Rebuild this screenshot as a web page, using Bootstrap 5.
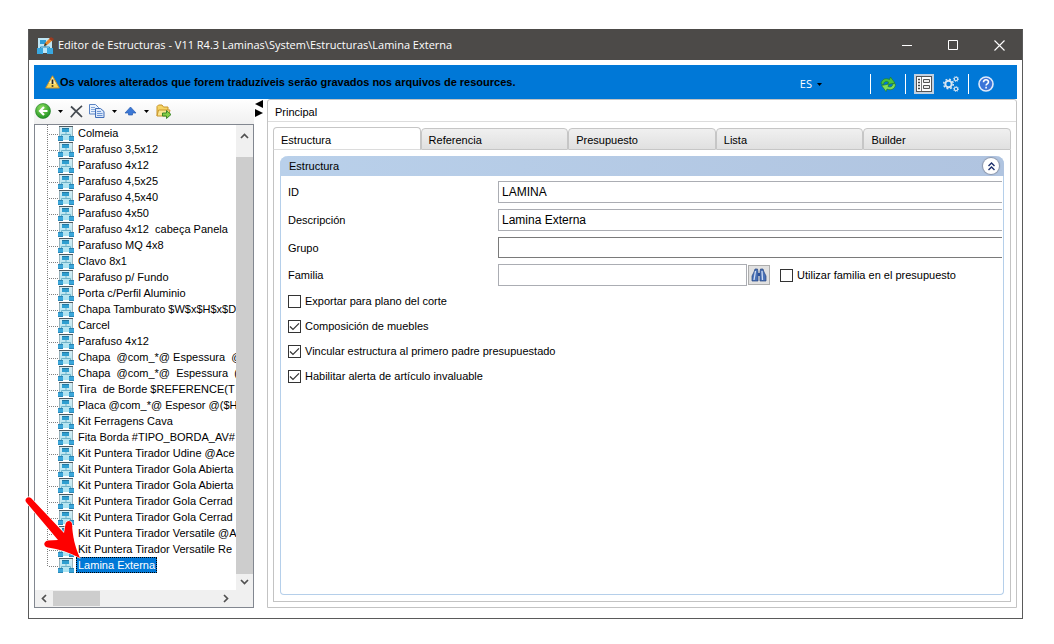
<!DOCTYPE html>
<html lang="es">
<head>
<meta charset="utf-8">
<meta name="viewport" content="width=device-width, initial-scale=1">
<title>Editor de Estructuras</title>
<link href="https://cdn.jsdelivr.net/npm/bootstrap@5.3.0/dist/css/bootstrap.min.css" rel="stylesheet">
<style>
body{font-family:"Liberation Sans",Arial,sans-serif;font-size:11px;line-height:16px;color:#000;background:#fff}
svg{display:block;flex:none}
button{color:inherit;font:inherit}
.app-window{margin:29px 31px 0 28px;border:1px solid #5a5a5a;border-top-color:#4c4a48}
.title-bar{background:#4c4a48;color:#fff;height:30px;font-family:"Open Sans","Noto Sans",sans-serif;font-size:11px}
.win-btn{width:46px;height:30px}
.plain-btn{background:none;border:0;padding:0;display:flex;align-items:center;justify-content:center}
.work-area{padding:5px 5px 10px}
.banner{background:#0078d7;height:34px;padding-left:11px}
.banner-text{font-weight:700}
.banner-tools{padding-right:22px}
.banner-icon{width:18px}
.lang-btn{font-family:"Open Sans","Noto Sans",sans-serif;font-size:11px;color:#fff;gap:5px;margin-right:40px}
.divider{width:1px;height:20px;background:#fff}
.tog{background:#c3d1e0;width:20px;height:20px}
.left-pane{width:220px;flex:none}
.tool-strip{height:25px;padding:0 0 1px 1px;background:linear-gradient(#fff,#f0f0f0)}
.drop-btn{padding:0 7px}
.copy-btn{margin-left:6px}
.tree-box{border:1px solid #828790;background:#fff}
.tree{padding:0 0 17px 12px;overflow:hidden;margin:0}
.tree li{height:16px;white-space:pre;display:flex;align-items:center}
.tree li::before{content:"";align-self:stretch;flex:none;width:1px;background:repeating-linear-gradient(#808080 0 1px,transparent 1px 2px)}
.tree li:last-child::before{height:9px;align-self:flex-start}
.tree li::after{content:"";order:1;width:10px;height:1px;margin-top:2px;flex:none;background:repeating-linear-gradient(90deg,transparent 0 1px,#808080 1px 2px)}
.tree svg{order:2}
.tree span{order:3;padding:0 2px;margin-left:2px;flex:none}
.tree .chosen{background:#0078d7;color:#fff;outline:1px dotted #000;outline-offset:-1px}
.vscroll{width:17px;background:#f0f0f0;flex:none}
.vscroll .thumb{background:#cdcdcd;margin-top:18px}
.hscroll{height:17px;background:#f0f0f0;padding-left:6px}
.hthumb{width:47px;height:15px;background:#cdcdcd;margin-left:6px}
.pointer{position:absolute;left:-12px;bottom:45px;pointer-events:none}
.splitter{width:13px;flex:none;padding:1px 0 0 1px}
.right-pane{border:1px solid #c3c3c3;border-radius:3px 3px 0 0;min-width:0}
.main-head{height:22px;padding:4px 7px;border-bottom:1px solid #dcdcdc}
.tab-frame{margin:5px}
.tab-row .tab-btn{flex:1 1 0;height:22px;text-align:left;padding:2px 7px 0;background:linear-gradient(#f0f0f0,#e0e0e0);border:1px solid #c6c6c6;border-radius:4px 4px 0 0;margin-top:1px}
.tab-row .tab-btn.active{background:#fff;border-bottom-color:#dcdcdc;height:23px;margin-top:0}
.tab-body{border:1px solid #c3c3c3;border-top:0;padding:6px}
.group{border:1px solid #b5cfea;border-top:0;border-radius:8px 8px 4px 4px}
.group-head{background:linear-gradient(90deg,#b9d0ea,#b0c4e0);height:20px;margin:0 -1px;padding:0 5px 0 9px;border-radius:8px 8px 0 0}
.round-btn{width:16px;height:16px;border-radius:50%;background:#fff;box-shadow:0 0 1px 1px #8a94a8}
.fields{padding:5px 1px 0 7px;gap:6px}
.f-label{width:210px;flex:none}
.f-in{height:22px;border:1px solid #abadb3;border-radius:0;padding:0 3px;font-size:12px;line-height:20px;color:#000;min-width:0;background:#fff}
.f-open{border-right:0}
.f-combo{height:21px;border-color:#7a7a7a}
.f-half{width:249px}
.find-btn{width:22px;height:20px;background:#e1e1e1;border:1px solid #adadad;margin-left:1px}
.side-check{margin-left:10px}
.checks{padding:7px 7px 0;gap:9px}
.ck{appearance:none;width:13px;height:13px;border:1px solid #333;background:#fff;margin:0 4px 0 0;flex:none}
.ck:checked{background:#fff url("data:image/svg+xml,%3Csvg xmlns='http://www.w3.org/2000/svg' viewBox='0 0 11 11'%3E%3Cpath d='M1 5.500l3 3 6-6.200' fill='none' stroke='%23333' stroke-width='1.2'/%3E%3C/svg%3E")}
</style>
</head>
<body>
<svg width="0" height="0" class="position-absolute" aria-hidden="true">
  <defs>
    <linearGradient id="ice" x1="0" y1="0" x2="0" y2="1"><stop offset="0" stop-color="#d9eef5"/><stop offset="1" stop-color="#a8e2f0"/></linearGradient>
    <radialGradient id="leaf" cx=".4" cy=".3" r=".8"><stop offset="0" stop-color="#8ee05f"/><stop offset="1" stop-color="#12881c"/></radialGradient>
    <symbol id="node" viewBox="0 0 16 16">
      <rect x="1" y="1" width="14" height="14" fill="url(#ice)"/>
      <path d="M1 1.500h14" stroke="#4e5a60"/>
      <path d="M1.500 2v9M14.500 2v9" stroke="#9ab4bd"/>
      <path d="M8 7v2M3.500 11V9.500h9V11" fill="none" stroke="#6fb2c8"/>
      <rect x="4" y="3" width="7" height="4" fill="#2f9fd0"/>
      <path d="M4 3.500h7" stroke="#2277a2"/>
      <rect x="0" y="11" width="5" height="5" fill="#3aa6da"/><path d="M0 15.500h5M0 11.500h5" stroke="#2b86b4"/>
      <rect x="11" y="11" width="5" height="5" fill="#3aa6da"/><path d="M11 15.500h5M11 11.500h5" stroke="#2b86b4"/>
    </symbol>
    <symbol id="caret" viewBox="0 0 5 3"><path d="M0 0h5L2.500 3z" fill="#000"/></symbol>
  </defs>
</svg>

<div class="app-window">
  <header class="title-bar d-flex align-items-center">
    <svg class="ms-2 me-1" width="17" height="17" viewBox="0 0 17 17" aria-hidden="true">
      <rect x="1" y="1" width="14" height="15" fill="#bfe6f5"/>
      <path d="M8 8v2M3.500 12v-2h9v2" fill="none" stroke="#2f86b5"/>
      <rect x="3" y="3" width="6" height="4" fill="#2e9bd6"/>
      <rect x="0" y="11" width="6" height="6" fill="#38a8e0"/><rect x="10" y="11" width="6" height="6" fill="#38a8e0"/>
      <path d="M7 9l1-3 5-5 3 2-6 5z" fill="#e8862c"/><path d="M12 2l2-2 3 2-2 2z" fill="#9c3a1e"/><path d="M7 9l1-3 2 2z" fill="#332"/>
    </svg>
    <span class="text-nowrap">Editor de Estructuras - V11 R4.3 Laminas\System\Estructuras\Lamina Externa</span>
    <div class="d-flex ms-auto">
      <button class="plain-btn win-btn" aria-label="Minimizar"><svg width="11" height="11"><path d="M0 5.500h10" stroke="#fff"/></svg></button>
      <button class="plain-btn win-btn" aria-label="Maximizar"><svg width="11" height="11"><path d="M.5.500h9v9h-9z" fill="none" stroke="#fff"/></svg></button>
      <button class="plain-btn win-btn" aria-label="Cerrar"><svg width="11" height="11"><path d="M.5.500l10 10M10.500.500l-10 10" stroke="#fff" stroke-width="1.100"/></svg></button>
    </div>
  </header>

  <div class="work-area">
    <div class="banner d-flex align-items-center">
      <svg width="15" height="14" viewBox="0 0 15 14" aria-hidden="true"><path d="M7.500.800L14.300 13H.700z" fill="#f6d55a" stroke="#c8922a" stroke-linejoin="round"/><path d="M7.500 2.500L11 9 4 8z" fill="#fbf0b4"/><path d="M7.500 4.500v4.500M7.500 10.300v1.500" stroke="#222" stroke-width="1.700"/></svg>
      <span class="banner-text text-nowrap">Os valores alterados que forem traduzíveis serão gravados nos arquivos de resources.</span>
      <div class="banner-tools d-flex align-items-center ms-auto gap-2 pt-1">
        <button class="plain-btn lang-btn">ES <svg width="5" height="3"><use href="#caret"/></svg></button>
        <div class="divider"></div>
        <button class="plain-btn banner-icon" aria-label="Actualizar"><svg width="16" height="16" viewBox="0 0 16 16"><path d="M1 8C1.500 3.500 5 1.500 9.500 3.500L10.500 1l4.500 6-7.500 1.500 1-2.500C6 4.800 4 5.500 3.500 8.500z" fill="#4cc23c" stroke="#1e7a1e" stroke-width=".6"/><path d="M15.500 8c0 4.500-4 7-8.500 5l-1 2.500-4.500-6 7.500-1.500-1 2.500c2.500 1 4.500.500 5-3z" fill="#7fdc57" stroke="#1e7a1e" stroke-width=".6"/></svg></button>
        <div class="divider"></div>
        <button class="plain-btn tog" aria-label="Panel"><svg width="16" height="16" viewBox="0 0 16 16"><rect x=".5" y=".5" width="15" height="15" fill="#fff" stroke="#555"/><path d="M5.500 1v14" stroke="#777"/><path d="M2 3.500h2M2 6.500h2M2 9.500h2M2 12.500h2" stroke="#444" stroke-width="1.500"/><path d="M7.500 3.500h6v3h-6zM7.500 9.500h6v3h-6z" fill="#eee" stroke="#555"/></svg></button>
        <button class="plain-btn banner-icon" aria-label="Opciones"><svg width="16" height="16" viewBox="0 0 16 16" fill="none" stroke="#d9e6f2"><circle cx="5.500" cy="8" r="3.200" stroke-width="2"/><circle cx="5.500" cy="8" r="4.800" stroke-width="1.500" stroke-dasharray="1.900 1.870"/><circle cx="13" cy="3" r="1.700" stroke-width="1.100"/><circle cx="13" cy="3" r="2.600" stroke-dasharray="1 1.040" stroke-width=".9"/><circle cx="13" cy="13" r="1.700" stroke-width="1.100"/><circle cx="13" cy="13" r="2.600" stroke-dasharray="1 1.040" stroke-width=".9"/></svg></button>
        <div class="divider"></div>
        <button class="plain-btn banner-icon" aria-label="Ayuda"><svg width="16" height="16" viewBox="0 0 16 16"><circle cx="8" cy="8" r="7" fill="#3c74d8" stroke="#dfe9fa" stroke-width="1.600"/><path d="M5.500 6.300C5.500 3 10.500 3 10.500 6c0 2-2.400 1.800-2.400 3.600M8.100 10.800v1.700" fill="none" stroke="#fff" stroke-width="1.600"/></svg></button>
      </div>
    </div>

    <main class="d-flex align-items-stretch">
      <aside class="left-pane position-relative">
        <div class="tool-strip d-flex align-items-center">
          <button class="plain-btn" aria-label="Atrás"><svg width="16" height="16" viewBox="0 0 16 16"><circle cx="8" cy="8" r="7.500" fill="url(#leaf)" stroke="#1c7c22" stroke-width=".6"/><path d="M9 4L5 8l4 4M5.500 8H12.500" fill="none" stroke="#fff" stroke-width="2.200"/></svg></button>
          <button class="plain-btn drop-btn" aria-label="Historial"><svg width="5" height="3"><use href="#caret"/></svg></button>
          <button class="plain-btn" aria-label="Eliminar"><svg width="13" height="13" viewBox="0 0 13 13"><path d="M1 1.500C5 5 8 8 12 12M12 .800C8 4 4 8 .800 12.200" fill="none" stroke="#444a50" stroke-width="1.700"/></svg></button>
          <button class="plain-btn copy-btn" aria-label="Copiar"><svg width="16" height="14" viewBox="0 0 16 14"><path d="M.5.500h6l3 3v6.500h-9z" fill="#eaf2fc" stroke="#5b84c4"/><path d="M2 3.500h4M2 5.500h6M2 7.500h4" stroke="#86a9dc"/><path d="M6.500 4.500h5l3.500 3v6H6.500z" fill="#dbe8fa" stroke="#3f6db8"/><path d="M8 7.500h4M8 9.500h5.500M8 11.500h5.500" stroke="#6d95d3"/></svg></button>
          <button class="plain-btn drop-btn" aria-label="Opciones de copia"><svg width="5" height="3"><use href="#caret"/></svg></button>
          <button class="plain-btn" aria-label="Subir"><svg width="13" height="10" viewBox="0 0 13 10"><path d="M6.500 1L12 7H8.500v2h-4V7H1z" fill="#3b78d6" stroke="#2a5db0" stroke-width=".7"/></svg></button>
          <button class="plain-btn drop-btn" aria-label="Opciones de orden"><svg width="5" height="3"><use href="#caret"/></svg></button>
          <button class="plain-btn" aria-label="Exportar carpeta"><svg width="16" height="15" viewBox="0 0 16 15"><path d="M1 12V2.500L2.500 1H6l1.500 2H12v3" fill="#f6d465" stroke="#c8952b"/><path d="M1 12l1.500-6H14l-1.500 6z" fill="#fbe692" stroke="#c8952b"/><path d="M6.500 9h4V6.500l4.500 4-4.500 4V12h-4z" fill="#86cf45" stroke="#2f7d22" stroke-width=".9"/></svg></button>
        </div>
        <div class="tree-box">
          <div class="d-flex">
            <ul class="tree list-unstyled flex-grow-1" aria-label="Estructuras">
              <li><svg width="16" height="16"><use href="#node"/></svg><span>Colmeia</span></li>
              <li><svg width="16" height="16"><use href="#node"/></svg><span>Parafuso 3,5x12</span></li>
              <li><svg width="16" height="16"><use href="#node"/></svg><span>Parafuso 4x12</span></li>
              <li><svg width="16" height="16"><use href="#node"/></svg><span>Parafuso 4,5x25</span></li>
              <li><svg width="16" height="16"><use href="#node"/></svg><span>Parafuso 4,5x40</span></li>
              <li><svg width="16" height="16"><use href="#node"/></svg><span>Parafuso 4x50</span></li>
              <li><svg width="16" height="16"><use href="#node"/></svg><span>Parafuso 4x12  cabeça Panela</span></li>
              <li><svg width="16" height="16"><use href="#node"/></svg><span>Parafuso MQ 4x8</span></li>
              <li><svg width="16" height="16"><use href="#node"/></svg><span>Clavo 8x1</span></li>
              <li><svg width="16" height="16"><use href="#node"/></svg><span>Parafuso p/ Fundo</span></li>
              <li><svg width="16" height="16"><use href="#node"/></svg><span>Porta c/Perfil Aluminio</span></li>
              <li><svg width="16" height="16"><use href="#node"/></svg><span>Chapa Tamburato $W$x$H$x$D</span></li>
              <li><svg width="16" height="16"><use href="#node"/></svg><span>Carcel</span></li>
              <li><svg width="16" height="16"><use href="#node"/></svg><span>Parafuso 4x12</span></li>
              <li><svg width="16" height="16"><use href="#node"/></svg><span>Chapa  @com_*@ Espessura  @</span></li>
              <li><svg width="16" height="16"><use href="#node"/></svg><span>Chapa  @com_*@  Espessura  (</span></li>
              <li><svg width="16" height="16"><use href="#node"/></svg><span>Tira  de Borde $REFERENCE(T</span></li>
              <li><svg width="16" height="16"><use href="#node"/></svg><span>Placa @com_*@ Espesor @($H</span></li>
              <li><svg width="16" height="16"><use href="#node"/></svg><span>Kit Ferragens Cava</span></li>
              <li><svg width="16" height="16"><use href="#node"/></svg><span>Fita Borda #TIPO_BORDA_AV#</span></li>
              <li><svg width="16" height="16"><use href="#node"/></svg><span>Kit Puntera Tirador Udine @Ace</span></li>
              <li><svg width="16" height="16"><use href="#node"/></svg><span>Kit Puntera Tirador Gola Abierta</span></li>
              <li><svg width="16" height="16"><use href="#node"/></svg><span>Kit Puntera Tirador Gola Abierta</span></li>
              <li><svg width="16" height="16"><use href="#node"/></svg><span>Kit Puntera Tirador Gola Cerrad</span></li>
              <li><svg width="16" height="16"><use href="#node"/></svg><span>Kit Puntera Tirador Gola Cerrad</span></li>
              <li><svg width="16" height="16"><use href="#node"/></svg><span>Kit Puntera Tirador Versatile @A</span></li>
              <li><svg width="16" height="16"><use href="#node"/></svg><span>Kit Puntera Tirador Versatile Re</span></li>
              <li><svg width="16" height="16"><use href="#node"/></svg><span class="chosen">Lamina Externa</span></li>
            </ul>
            <div class="vscroll d-flex flex-column align-items-center py-1">
              <svg class="mt-1" width="9" height="6" viewBox="0 0 9 6"><path d="M1 5l3.500-3.500L8 5" fill="none" stroke="#505050" stroke-width="1.700"/></svg>
              <div class="thumb w-100 flex-grow-1"></div>
              <svg class="mt-1" width="9" height="8" viewBox="0 0 9 8"><path d="M1 2l3.500 3.500L8 2" fill="none" stroke="#505050" stroke-width="1.700"/></svg>
            </div>
          </div>
          <div class="hscroll d-flex align-items-center">
            <svg width="6" height="9" viewBox="0 0 6 9"><path d="M5 1L1.500 4.500 5 8" fill="none" stroke="#505050" stroke-width="1.700"/></svg>
            <div class="hthumb"></div>
            <svg class="ms-auto me-4" width="6" height="9" viewBox="0 0 6 9"><path d="M1 1l3.500 3.500L1 8" fill="none" stroke="#505050" stroke-width="1.700"/></svg>
          </div>
        </div>
        <svg class="pointer" width="62" height="68" viewBox="22 496 62 68" aria-hidden="true">
          <path d="M26 503c-2-3 2-6.500 5-4L64 534l1.500-9c1-4 6-4 6.500 0 .5 12 3 23 8 34-12-6-21-9-32-10.500-5-1-5-6 0-7l10-.5z" fill="#fe0000" stroke="#fff" stroke-width="1.200" stroke-linejoin="round" paint-order="stroke"/>
        </svg>
      </aside>

      <div class="splitter">
        <svg width="9" height="18" viewBox="0 0 9 18" aria-hidden="true"><path d="M8 0v8L0 4zM0 9v8l8-4z" fill="#000"/></svg>
      </div>

      <section class="right-pane flex-grow-1 d-flex flex-column">
        <div class="main-head">Principal</div>
        <div class="tab-frame flex-grow-1 d-flex flex-column">
          <div class="tab-row d-flex" role="tablist">
            <button class="tab-btn active" role="tab" aria-selected="true">Estructura</button>
            <button class="tab-btn" role="tab">Referencia</button>
            <button class="tab-btn" role="tab">Presupuesto</button>
            <button class="tab-btn" role="tab">Lista</button>
            <button class="tab-btn" role="tab">Builder</button>
          </div>
          <div class="tab-body flex-grow-1 d-flex">
            <form class="group flex-grow-1">
              <div class="group-head d-flex align-items-center justify-content-between">
                <span>Estructura</span>
                <button type="button" class="plain-btn round-btn" aria-label="Contraer"><svg width="9" height="9" viewBox="0 0 9 9"><path d="M1.500 4l3-3 3 3M1.500 8l3-3 3 3" fill="none" stroke="#1c2e6b" stroke-width="1.400"/></svg></button>
              </div>
              <div class="fields d-flex flex-column">
                <div class="d-flex align-items-center"><label class="f-label" for="fid">ID</label><input class="f-in f-open flex-grow-1" id="fid" value="LAMINA"></div>
                <div class="d-flex align-items-center"><label class="f-label" for="fdesc">Descripción</label><input class="f-in f-open flex-grow-1" id="fdesc" value="Lamina Externa"></div>
                <div class="d-flex align-items-center"><label class="f-label" for="fgrp">Grupo</label><input class="f-in f-open f-combo flex-grow-1" id="fgrp"></div>
                <div class="d-flex align-items-center"><label class="f-label" for="ffam">Familia</label><input class="f-in f-half" id="ffam">
                  <button type="button" class="plain-btn find-btn" aria-label="Buscar familia"><svg width="16" height="14" viewBox="0 0 16 14"><path d="M4 1h2.500l.5 3v9H1V8l2-4zM9.500 1H12l1 3 2 4v5H9V4z" fill="#4a72b8" stroke="#27457f" stroke-width=".7"/><path d="M7 5h2v3H7z" fill="#2c4f96"/><path d="M4.500 3L3 12M11 3l.5 9" stroke="#cfdcf2" stroke-width="1.300"/></svg></button>
                  <label class="side-check d-flex align-items-center text-nowrap"><input type="checkbox" class="ck">Utilizar familia en el presupuesto</label>
                </div>
              </div>
              <div class="checks d-flex flex-column align-items-start">
                <label class="d-flex align-items-center"><input type="checkbox" class="ck">Exportar para plano del corte</label>
                <label class="d-flex align-items-center"><input type="checkbox" class="ck" checked>Composición de muebles</label>
                <label class="d-flex align-items-center"><input type="checkbox" class="ck" checked>Vincular estructura al primero padre presupuestado</label>
                <label class="d-flex align-items-center"><input type="checkbox" class="ck" checked>Habilitar alerta de artículo invaluable</label>
              </div>
            </form>
          </div>
        </div>
      </section>
    </main>
  </div>
</div>
<script src="https://cdn.jsdelivr.net/npm/bootstrap@5.3.0/dist/js/bootstrap.bundle.min.js"></script>
</body>
</html>
